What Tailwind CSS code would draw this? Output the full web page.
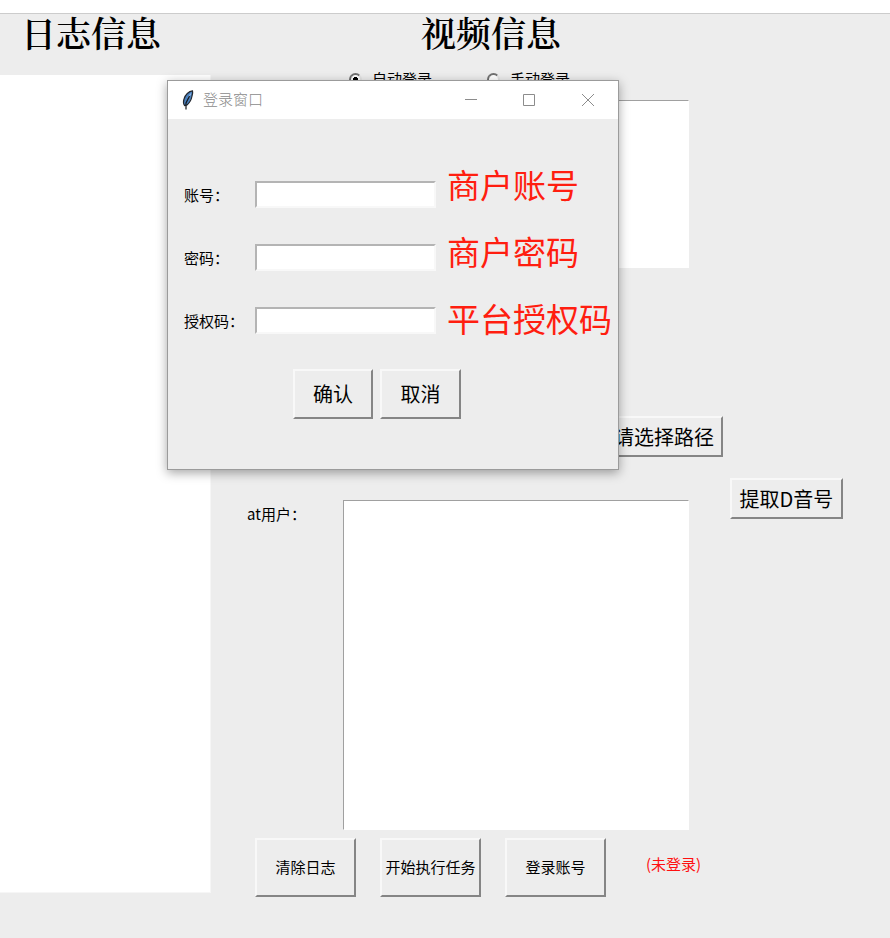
<!DOCTYPE html>
<html lang="zh-CN">

<head>
    <meta charset="UTF-8">
    <meta name="viewport" content="width=device-width, initial-scale=1.0">
    <title>登录窗口</title>
    <script src="https://cdn.jsdelivr.net/npm/@tailwindcss/browser@4"></script>
</head>

<body class="bg-white pt-[13px] font-['Noto_Sans_CJK_SC',sans-serif] text-[15px] leading-5 text-black">

    <div class="relative flex min-h-[925px] border-t border-[#cccccc] bg-[#ededed]">

        <!-- Log -->
        <section class="flex w-[211px] shrink-0 flex-col pb-[45px]">
            <h1 class="h-[61px] pl-[21px] font-['Noto_Serif_CJK_SC','Noto_Sans_CJK_SC',serif] text-[35px] font-semibold leading-9">日志信息</h1>
            <textarea aria-label="日志信息" class="flex-1 resize-none border-r border-b border-[#f6f6f6] bg-white outline-none"></textarea>
        </section>

        <!-- Video form -->
        <section class="flex-1 pl-9">
            <h1 class="h-14 pl-[174px] font-['Noto_Serif_CJK_SC','Noto_Sans_CJK_SC',serif] text-[35px] font-semibold leading-9">视频信息</h1>

            <div class="flex h-[30px] pl-[102px]">
                <label class="flex h-[18px] w-[138px] items-center gap-2.5">
                    <input type="radio" name="mode" checked class="size-[13px] appearance-none rounded-full border-2 border-t-[#707070] border-r-[#e3e3e3] border-b-[#e3e3e3] border-l-[#707070] bg-white bg-radial from-black from-35% to-white to-40%">
                    自动登录
                </label>
                <label class="flex h-[18px] items-center gap-2.5">
                    <input type="radio" name="mode" class="size-[13px] appearance-none rounded-full border-2 border-t-[#707070] border-r-[#e3e3e3] border-b-[#e3e3e3] border-l-[#707070] bg-white">
                    手动登录
                </label>
            </div>

            <div class="pl-24">
                <textarea aria-label="视频信息" class="block h-[168px] w-[346px] resize-none border border-t-[#a0a0a0] border-r-white border-b-white border-l-[#a0a0a0] bg-white outline-none"></textarea>
            </div>

            <div class="mt-[148px] flex w-[476px] justify-end">
                <button class="h-[41px] w-[114px] whitespace-nowrap border-2 border-t-[#f8f8f8] border-r-[#858585] border-b-[#858585] border-l-[#f8f8f8] pr-1 text-xl">请选择路径</button>
            </div>

            <div class="mt-[21px] flex items-start">
                <label for="atUsers" class="mt-[26px] w-24">at用户：</label>
                <textarea id="atUsers" class="mt-[22px] h-[330px] w-[346px] resize-none border border-t-[#a0a0a0] border-r-white border-b-white border-l-[#a0a0a0] bg-white outline-none"></textarea>
                <button class="ml-[41px] h-[41px] w-[113px] whitespace-nowrap border-2 border-t-[#f8f8f8] border-r-[#858585] border-b-[#858585] border-l-[#f8f8f8] text-xl">提取D音号</button>
            </div>

            <div class="mt-2 flex items-center gap-6 pl-2">
                <button class="h-[59px] w-[101px] whitespace-nowrap border-2 border-t-[#f8f8f8] border-r-[#858585] border-b-[#858585] border-l-[#f8f8f8] pb-0.5">清除日志</button>
                <button class="h-[59px] w-[101px] whitespace-nowrap border-2 border-t-[#f8f8f8] border-r-[#858585] border-b-[#858585] border-l-[#f8f8f8] pb-0.5">开始执行任务</button>
                <button class="h-[59px] w-[101px] whitespace-nowrap border-2 border-t-[#f8f8f8] border-r-[#858585] border-b-[#858585] border-l-[#f8f8f8] pb-0.5">登录账号</button>
                <span class="ml-4 pb-2 text-[#ff1010]">(未登录)</span>
            </div>
        </section>

        <!-- Login dialog -->
        <div role="dialog" aria-labelledby="dialogTitle" class="absolute top-[66px] left-[167px] h-[390px] w-[452px] border border-[#9b9b9b] bg-[#ededed] shadow-[0_3px_10px_rgba(0,0,0,0.35)]">
            <div class="flex h-[38px] items-center bg-white pl-3 text-[#8c8c8c]">
                <svg class="h-5 w-4" viewBox="0 0 16 20">
                    <path d="M12.500 .8C9 1 5 5 4 9C3 12 3.500 14 4.500 15.500L7 15C10 12.500 11.500 9 12 6C12.500 4 13 2 12.500 .8Z" fill="#4a80bd" stroke="#23272e" stroke-width="1.200" />
                    <path d="M11 3.500L8 8" stroke="#8fb8e6" stroke-width="1.200" />
                    <path d="M9.500 6L6 13V19.500" fill="none" stroke="#15181c" stroke-width="1.200" />
                </svg>
                <h2 id="dialogTitle" class="ml-[7px] flex-1 pb-0.5 font-light">登录窗口</h2>
                <button aria-label="最小化" class="flex w-[58px] justify-center">
                    <svg class="size-3" viewBox="0 0 12 12" stroke="#8c8c8c"><path d="M0 5.500H12" /></svg>
                </button>
                <button aria-label="最大化" class="flex w-[58px] justify-center">
                    <svg class="size-3" viewBox="0 0 12 12" fill="none" stroke="#8c8c8c"><path d="M.5 .5H11.500V11.500H.5Z" /></svg>
                </button>
                <button aria-label="关闭" class="flex w-[60px] justify-center">
                    <svg class="size-3" viewBox="0 0 12 12" stroke="#8c8c8c"><path d="M0 0L12 12M12 0L0 12" /></svg>
                </button>
            </div>

            <form class="pt-[46px]">
                <div class="flex">
                    <div class="flex flex-col gap-9 pt-4 pl-4">
                        <div class="flex items-center">
                            <label for="account" class="w-[71px]">账号：</label>
                            <input id="account" type="text" class="h-[27px] w-[181px] border-2 border-t-[#b4b4b4] border-r-[#f8f8f8] border-b-[#f8f8f8] border-l-[#b4b4b4] bg-white outline-none">
                        </div>
                        <div class="flex items-center">
                            <label for="password" class="w-[71px]">密码：</label>
                            <input id="password" type="password" class="h-[27px] w-[181px] border-2 border-t-[#b4b4b4] border-r-[#f8f8f8] border-b-[#f8f8f8] border-l-[#b4b4b4] bg-white outline-none">
                        </div>
                        <div class="flex items-center">
                            <label for="authCode" class="w-[71px]">授权码：</label>
                            <input id="authCode" type="text" class="h-[27px] w-[181px] border-2 border-t-[#b4b4b4] border-r-[#f8f8f8] border-b-[#f8f8f8] border-l-[#b4b4b4] bg-white outline-none">
                        </div>
                    </div>
                    <div class="-mt-3.5 flex-1 whitespace-nowrap pl-[11px] text-[33px] leading-[67px] text-[#ff1e10]">
                        <p>商户账号</p>
                        <p>商户密码</p>
                        <p>平台授权码</p>
                    </div>
                </div>

                <div class="mt-[17px] flex gap-[7px] pl-[125px] text-xl">
                    <button type="button" class="h-[50px] w-20 border-2 border-t-[#f8f8f8] border-r-[#858585] border-b-[#858585] border-l-[#f8f8f8]">确认</button>
                    <button type="button" class="h-[50px] w-[81px] border-2 border-t-[#f8f8f8] border-r-[#858585] border-b-[#858585] border-l-[#f8f8f8]">取消</button>
                </div>
            </form>
        </div>
    </div>

</body>

</html>
